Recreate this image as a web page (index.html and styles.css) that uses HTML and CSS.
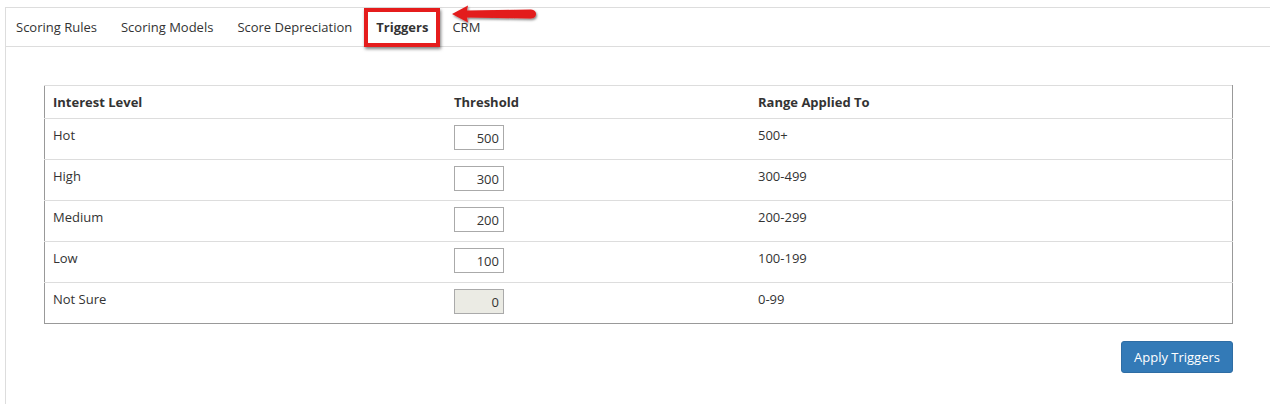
FILE: index.html
```html
<!DOCTYPE html>
<html lang="en">
<head>
    <meta charset="UTF-8">
    <title>Lead Scoring - Triggers</title>
    <link rel="stylesheet" href="styles.css">
</head>
<body>
    <div class="panel">
        <ul class="tabs">
            <li>Scoring Rules</li>
            <li>Scoring Models</li>
            <li>Score Depreciation</li>
            <li class="active">Triggers</li>
            <li>CRM</li>
        </ul>
        <svg class="callout-arrow" width="92" height="26" viewBox="0 0 92 26">
            <defs>
                <filter id="shade" x="-20%" y="-40%" width="140%" height="180%">
                    <feDropShadow dx="1" dy="1.5" stdDeviation="1" flood-color="#000" flood-opacity="0.5"/>
                </filter>
            </defs>
            <path d="M3 10 L19 1.5 L18 6.5 L82 5.5 Q87 6 87 10 Q87 14 82 14.5 L18 13.5 L19 18.5 Z" fill="#e31b1b" filter="url(#shade)"/>
        </svg>

        <div class="content">
            <table class="triggers">
                <thead>
                    <tr>
                        <th class="col-level">Interest Level</th>
                        <th class="col-threshold">Threshold</th>
                        <th>Range Applied To</th>
                    </tr>
                </thead>
                <tbody>
                    <tr>
                        <td>Hot</td>
                        <td><input type="text" value="500"></td>
                        <td>500+</td>
                    </tr>
                    <tr>
                        <td>High</td>
                        <td><input type="text" value="300"></td>
                        <td>300-499</td>
                    </tr>
                    <tr>
                        <td>Medium</td>
                        <td><input type="text" value="200"></td>
                        <td>200-299</td>
                    </tr>
                    <tr>
                        <td>Low</td>
                        <td><input type="text" value="100"></td>
                        <td>100-199</td>
                    </tr>
                    <tr>
                        <td>Not Sure</td>
                        <td><input type="text" value="0" disabled></td>
                        <td>0-99</td>
                    </tr>
                </tbody>
            </table>

            <div class="actions">
                <button class="btn-primary">Apply Triggers</button>
            </div>
        </div>
    </div>
</body>
</html>
```

FILE: styles.css
```css
body {
    margin: 0;
    font-family: "Open Sans", Arial, sans-serif;
    font-size: 13px;
    color: #333;
    background: #fff;
}

.panel {
    position: relative;
    margin: 7px 0 0 5px;
    border-top: 1px solid #ddd;
    border-left: 1px solid #ddd;
    min-height: 396px;
}

.tabs {
    display: flex;
    gap: 24px;
    list-style: none;
    margin: 0;
    padding: 0 0 0 10px;
    height: 38px;
    align-items: center;
    border-bottom: 1px solid #ddd;
}

.tabs li {
    position: relative;
    line-height: 18px;
    color: #333;
}

.tabs li.active {
    font-weight: bold;
}

.tabs li.active::after {
    content: "";
    position: absolute;
    left: -12px;
    right: -12px;
    top: -10px;
    bottom: -11px;
    border: 4px solid #e51c1c;
    box-shadow: 1px 2px 3px rgba(0, 0, 0, 0.5);
}

.callout-arrow {
    position: absolute;
    left: 443px;
    top: -4px;
}

.content {
    padding: 38px 37px 30px 38px;
}

.triggers {
    width: 100%;
    border-collapse: collapse;
    border-left: 1px solid #999;
    border-right: 1px solid #999;
    border-bottom: 1px solid #999;
    border-top: 1px solid #ddd;
}

.triggers th {
    text-align: left;
    font-weight: bold;
    height: 32px;
    padding: 0 8px;
    border-bottom: 1px solid #ddd;
}

.col-level {
    width: 385px;
}

.col-threshold {
    width: 288px;
}

.triggers td {
    vertical-align: top;
    height: 41px;
    box-sizing: border-box;
    padding: 7px 8px 0 8px;
    border-top: 1px solid #ddd;
    line-height: 18px;
}

.triggers td input {
    width: 50px;
    height: 25px;
    box-sizing: border-box;
    margin: -1px 0 0 0;
    padding: 0 4px;
    border: 1px solid #aaa;
    font-family: inherit;
    font-size: 13px;
    color: #333;
    text-align: right;
    background: #fff;
}

.triggers td input:disabled {
    background: #ebebe4;
}

.actions {
    display: flex;
    justify-content: flex-end;
    margin-top: 17px;
}

.btn-primary {
    width: 112px;
    height: 32px;
    border: 1px solid #2e6da4;
    border-radius: 3px;
    background: #337ab7;
    color: #fff;
    font-family: inherit;
    font-size: 13px;
    cursor: pointer;
}
```
